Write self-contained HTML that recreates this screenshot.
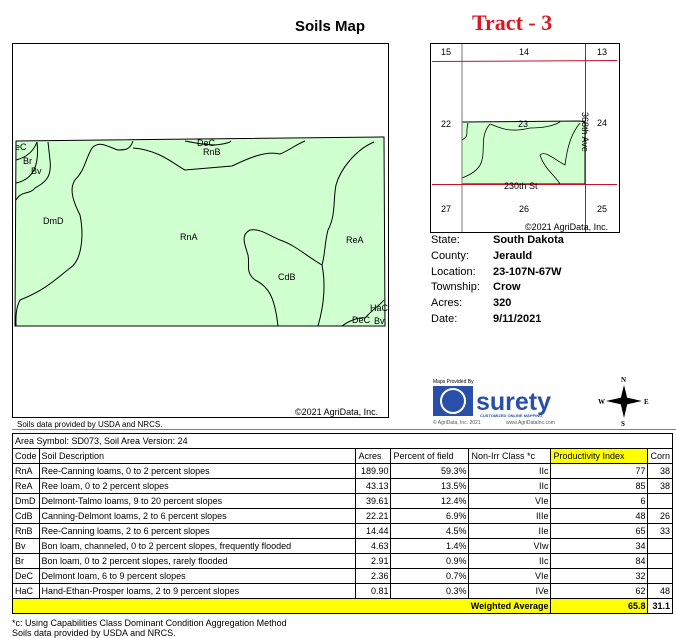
<!DOCTYPE html>
<html><head><meta charset="utf-8"><style>
body{margin:0;width:676px;height:638px;background:#fff;font-family:"Liberation Sans",Arial,sans-serif;position:relative;overflow:hidden;color:#000}
.a{position:absolute}
table{border-collapse:collapse;position:absolute;left:12px;top:433px;width:661px;font-size:9px;font-family:"Liberation Sans",Arial,sans-serif}
td{border:1px solid #000;padding:0 2px;height:14px;line-height:13px;white-space:nowrap}
.r{text-align:right}
.y{background:#ffff00}
.info div{height:15.8px;font-size:11px}
</style></head><body>
<div class="a" style="left:295px;top:18px;font-size:15px;font-weight:bold">Soils Map</div>
<div class="a" style="left:472px;top:10px;font-size:22px;font-weight:bold;color:#e0141e;font-family:'Liberation Serif',serif">Tract - 3</div>

<svg class="a" style="left:0;top:0" width="676" height="430">
<rect x="12.5" y="43.5" width="376" height="374" fill="#fff" stroke="#000"/>
<polygon points="16,141 384,137 385,326 15,326" fill="#d0ffd0" stroke="#000" stroke-width="1"/>
<g fill="none" stroke="#000" stroke-width="1">
<path d="M16,160 C28,157 34,150 37,142"/>
<path d="M16,183 C30,180 40,170 37,142"/>
<path d="M16,200 C22,190 30,195 35,188 C45,182 52,178 50,160 L48,142"/>
<path d="M133,141 C130,150 125,150 118,150 C108,147 100,140 92,148 C85,160 85,170 75,180 C68,190 75,205 80,215 C85,240 80,262 70,268 C55,280 45,290 20,300 C15,310 16,320 16,326"/>
<path d="M133,148 C160,150 175,165 185,170 L232,166 C245,160 265,150 280,154 C290,150 295,145 305,141"/>
<path d="M185,141 C195,143 205,145 215,145 C225,144 232,142 230,141"/>
<path d="M374,142 C355,150 340,170 336,185 C333,200 336,215 328,230 C325,240 325,255 322,265 C305,255 295,245 280,240 C270,236 260,228 250,230 C240,235 245,245 248,255 C250,265 245,272 255,280 C270,287 275,300 278,326"/>
<path d="M322,265 C326,285 324,305 318,326"/>
<path d="M342,326 C350,320 360,317 365,318 C372,310 380,305 384,300"/>
</g>
<g font-size="9" fill="#000">
<text x="15" y="150">eC</text><text x="23" y="164">Br</text><text x="31" y="174">Bv</text>
<text x="197" y="146">DeC</text><text x="203" y="155">RnB</text>
<text x="43" y="224">DmD</text><text x="180" y="240">RnA</text><text x="346" y="243">ReA</text>
<text x="278" y="280">CdB</text><text x="370" y="311">HaC</text><text x="352" y="323">DeC</text><text x="374" y="324">Bv</text>
<text x="295" y="415">©2021 AgriData, Inc.</text>
</g>
<rect x="430.5" y="43.5" width="189" height="189" fill="#fff" stroke="#000"/>
<polygon points="462,122 580,121 585,122 585,184 462,184" fill="#d0ffd0" stroke="#000"/>
<g fill="none" stroke="#000" stroke-width="0.8">
<path d="M468,123 C465,135 470,135 462,140"/><path d="M490,124 C480,135 485,150 482,160 C480,170 470,175 462,178"/>
<path d="M490,124 C500,128 510,133 530,128 C545,128 555,125 560,122"/>
<path d="M580,123 C570,135 567,150 565,165 C555,160 545,150 540,155 C545,170 555,175 560,184"/>
</g>
<line x1="462" y1="44" x2="462" y2="232" stroke="#777"/>
<line x1="432" y1="61.5" x2="617" y2="60.5" stroke="#c8102e"/>
<line x1="432" y1="184.5" x2="617" y2="184.5" stroke="#c8102e"/>
<line x1="585.5" y1="44" x2="585.5" y2="232" stroke="#c8102e"/>
<g font-size="9" fill="#000">
<text x="441" y="55">15</text><text x="519" y="55">14</text><text x="597" y="55">13</text>
<text x="441" y="127">22</text><text x="518" y="127">23</text><text x="597" y="126">24</text>
<text x="504" y="189">230th St</text>
<text x="441" y="212">27</text><text x="519" y="212">26</text><text x="597" y="212">25</text>
<text x="525" y="230">©2021 AgriData, Inc.</text>
<text transform="translate(582,112) rotate(90)">368th Ave</text>
<text x="433" y="383" font-size="5">Maps Provided By</text>
<text x="433" y="424" font-size="5" fill="#555">© AgriData, Inc. 2021</text>
<text x="506" y="424" font-size="5" fill="#555">www.AgriDataInc.com</text>
</g>
<rect x="433" y="386" width="40" height="30" fill="#2a4fa8"/>
<circle cx="453" cy="401" r="12" fill="none" stroke="#fff" stroke-width="2"/>
<text x="476" y="410" font-size="25" font-weight="bold" fill="#2a4fa8" font-family="Liberation Sans">surety</text>
<text x="480" y="417" font-size="4" fill="#2a4fa8" font-weight="bold">CUSTOMIZED ONLINE MAPPING</text>
<g fill="#000"><polygon points="624,385 628,401 624,418 620,401"/><polygon points="606,401 624,397 642,401 624,405"/></g>
<g font-size="7" font-family="Liberation Serif" font-weight="bold"><text x="621" y="382">N</text><text x="598" y="404">W</text><text x="644" y="404">E</text><text x="621" y="426">S</text></g>
<line x1="12" y1="430" x2="676" y2="430" stroke="#000"/>
</svg>
<div class="a" style="left:17px;top:420px;font-size:8px">Soils data provided by USDA and NRCS.</div>

<div class="a info" style="left:431px;top:234px">
<div>State:</div><div>County:</div><div>Location:</div><div>Township:</div><div>Acres:</div><div>Date:</div></div>
<div class="a info" style="left:493px;top:234px;font-weight:bold">
<div>South Dakota</div><div>Jerauld</div><div>23-107N-67W</div><div>Crow</div><div>320</div><div>9/11/2021</div></div>

<table>
<tr><td colspan="7">Area Symbol: SD073, Soil Area Version: 24</td></tr>
<tr><td style="width:20px">Code</td><td>Soil Description</td><td style="width:30px">Acres</td><td style="width:73px">Percent of field</td><td style="width:77px">Non-Irr Class *c</td><td class="y" style="width:92px">Productivity Index</td><td style="width:15px">Corn</td></tr>
<tr><td>RnA</td><td>Ree-Canning loams, 0 to 2 percent slopes</td><td class="r">189.90</td><td class="r">59.3%</td><td class="r">IIc</td><td class="r">77</td><td class="r">38</td></tr>
<tr><td>ReA</td><td>Ree loam, 0 to 2 percent slopes</td><td class="r">43.13</td><td class="r">13.5%</td><td class="r">IIc</td><td class="r">85</td><td class="r">38</td></tr>
<tr><td>DmD</td><td>Delmont-Talmo loams, 9 to 20 percent slopes</td><td class="r">39.61</td><td class="r">12.4%</td><td class="r">VIe</td><td class="r">6</td><td></td></tr>
<tr><td>CdB</td><td>Canning-Delmont loams, 2 to 6 percent slopes</td><td class="r">22.21</td><td class="r">6.9%</td><td class="r">IIIe</td><td class="r">48</td><td class="r">26</td></tr>
<tr><td>RnB</td><td>Ree-Canning loams, 2 to 6 percent slopes</td><td class="r">14.44</td><td class="r">4.5%</td><td class="r">IIe</td><td class="r">65</td><td class="r">33</td></tr>
<tr><td>Bv</td><td>Bon loam, channeled, 0 to 2 percent slopes, frequently flooded</td><td class="r">4.63</td><td class="r">1.4%</td><td class="r">VIw</td><td class="r">34</td><td></td></tr>
<tr><td>Br</td><td>Bon loam, 0 to 2 percent slopes, rarely flooded</td><td class="r">2.91</td><td class="r">0.9%</td><td class="r">IIc</td><td class="r">84</td><td></td></tr>
<tr><td>DeC</td><td>Delmont loam, 6 to 9 percent slopes</td><td class="r">2.36</td><td class="r">0.7%</td><td class="r">VIe</td><td class="r">32</td><td></td></tr>
<tr><td>HaC</td><td>Hand-Ethan-Prosper loams, 2 to 9 percent slopes</td><td class="r">0.81</td><td class="r">0.3%</td><td class="r">IVe</td><td class="r">62</td><td class="r">48</td></tr>
<tr style="font-weight:bold"><td colspan="5" class="r y">Weighted Average</td><td class="r y">65.8</td><td class="r">31.1</td></tr>
</table>
<div class="a" style="left:12px;top:618px;font-size:9px;line-height:10px">*c: Using Capabilities Class Dominant Condition Aggregation Method<br>Soils data provided by USDA and NRCS.</div>
</body></html>
